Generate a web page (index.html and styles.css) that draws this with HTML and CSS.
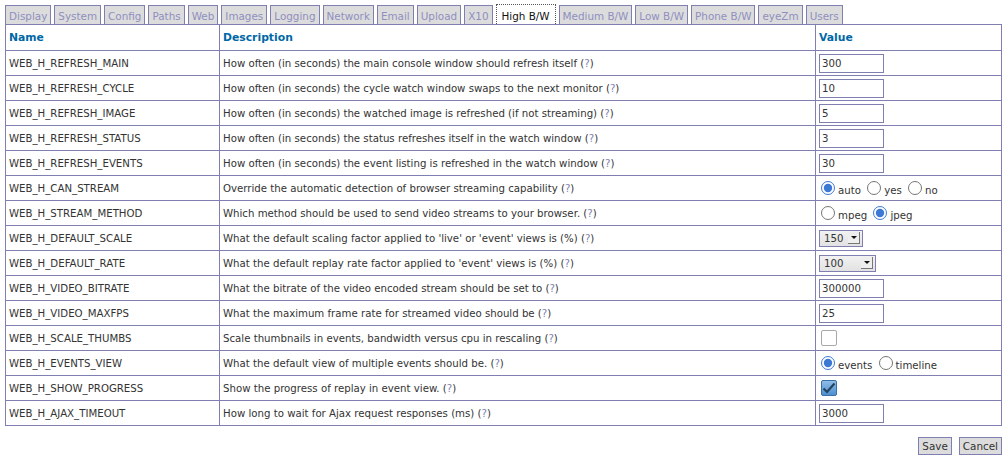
FILE: index.html
```html
<!DOCTYPE html>
<html lang="en">
<head>
    <meta charset="UTF-8">
    <title>ZoneMinder - Options</title>
    <link rel="stylesheet" href="styles.css">
</head>
<body>
    <ul class="tabs">
        <li><a href="#">Display</a></li>
        <li><a href="#">System</a></li>
        <li><a href="#">Config</a></li>
        <li><a href="#">Paths</a></li>
        <li><a href="#">Web</a></li>
        <li><a href="#">Images</a></li>
        <li><a href="#">Logging</a></li>
        <li><a href="#">Network</a></li>
        <li><a href="#">Email</a></li>
        <li><a href="#">Upload</a></li>
        <li><a href="#">X10</a></li>
        <li class="active">High B/W</li>
        <li><a href="#">Medium B/W</a></li>
        <li><a href="#">Low B/W</a></li>
        <li><a href="#">Phone B/W</a></li>
        <li><a href="#">eyeZm</a></li>
        <li><a href="#">Users</a></li>
    </ul>

    <form class="options">
        <table class="contentTable">
            <thead>
                <tr>
                    <th class="colName">Name</th>
                    <th class="colDesc">Description</th>
                    <th class="colValue">Value</th>
                </tr>
            </thead>
            <tbody>
                <tr>
                    <td>WEB_H_REFRESH_MAIN</td>
                    <td>How often (in seconds) the main console window should refresh itself (<a href="#">?</a>)</td>
                    <td><input type="text" class="small" value="300"></td>
                </tr>
                <tr>
                    <td>WEB_H_REFRESH_CYCLE</td>
                    <td>How often (in seconds) the cycle watch window swaps to the next monitor (<a href="#">?</a>)</td>
                    <td><input type="text" class="small" value="10"></td>
                </tr>
                <tr>
                    <td>WEB_H_REFRESH_IMAGE</td>
                    <td>How often (in seconds) the watched image is refreshed (if not streaming) (<a href="#">?</a>)</td>
                    <td><input type="text" class="small" value="5"></td>
                </tr>
                <tr>
                    <td>WEB_H_REFRESH_STATUS</td>
                    <td>How often (in seconds) the status refreshes itself in the watch window (<a href="#">?</a>)</td>
                    <td><input type="text" class="small" value="3"></td>
                </tr>
                <tr>
                    <td>WEB_H_REFRESH_EVENTS</td>
                    <td>How often (in seconds) the event listing is refreshed in the watch window (<a href="#">?</a>)</td>
                    <td><input type="text" class="small" value="30"></td>
                </tr>
                <tr>
                    <td>WEB_H_CAN_STREAM</td>
                    <td>Override the automatic detection of browser streaming capability (<a href="#">?</a>)</td>
                    <td>
                        <label><input type="radio" name="stream" checked>auto</label>
                        <label><input type="radio" name="stream">yes</label>
                        <label><input type="radio" name="stream">no</label>
                    </td>
                </tr>
                <tr>
                    <td>WEB_H_STREAM_METHOD</td>
                    <td>Which method should be used to send video streams to your browser. (<a href="#">?</a>)</td>
                    <td>
                        <label><input type="radio" name="method">mpeg</label>
                        <label><input type="radio" name="method" checked>jpeg</label>
                    </td>
                </tr>
                <tr>
                    <td>WEB_H_DEFAULT_SCALE</td>
                    <td>What the default scaling factor applied to 'live' or 'event' views is (%) (<a href="#">?</a>)</td>
                    <td>
                        <div class="select narrow"><span>150</span><i></i></div>
                    </td>
                </tr>
                <tr>
                    <td>WEB_H_DEFAULT_RATE</td>
                    <td>What the default replay rate factor applied to 'event' views is (%) (<a href="#">?</a>)</td>
                    <td>
                        <div class="select wide"><span>100</span><i></i></div>
                    </td>
                </tr>
                <tr>
                    <td>WEB_H_VIDEO_BITRATE</td>
                    <td>What the bitrate of the video encoded stream should be set to (<a href="#">?</a>)</td>
                    <td><input type="text" class="small" value="300000"></td>
                </tr>
                <tr>
                    <td>WEB_H_VIDEO_MAXFPS</td>
                    <td>What the maximum frame rate for streamed video should be (<a href="#">?</a>)</td>
                    <td><input type="text" class="small" value="25"></td>
                </tr>
                <tr>
                    <td>WEB_H_SCALE_THUMBS</td>
                    <td>Scale thumbnails in events, bandwidth versus cpu in rescaling (<a href="#">?</a>)</td>
                    <td><span class="check"></span></td>
                </tr>
                <tr>
                    <td>WEB_H_EVENTS_VIEW</td>
                    <td>What the default view of multiple events should be. (<a href="#">?</a>)</td>
                    <td>
                        <label><input type="radio" name="view" checked>events</label>
                        <label><input type="radio" name="view">timeline</label>
                    </td>
                </tr>
                <tr>
                    <td>WEB_H_SHOW_PROGRESS</td>
                    <td>Show the progress of replay in event view. (<a href="#">?</a>)</td>
                    <td>
                        <span class="check checked">
                            <svg width="14" height="12" viewBox="0 0 14 12"><path d="M1.5 6.5 L5 10 L12.5 1.5" fill="none" stroke="#24425e" stroke-width="2.2"/></svg>
                        </span>
                    </td>
                </tr>
                <tr>
                    <td>WEB_H_AJAX_TIMEOUT</td>
                    <td>How long to wait for Ajax request responses (ms) (<a href="#">?</a>)</td>
                    <td><input type="text" class="small" value="3000"></td>
                </tr>
            </tbody>
        </table>
        <div class="buttons">
            <button type="button">Save</button>
            <button type="button">Cancel</button>
        </div>
    </form>
</body>
</html>
```

FILE: styles.css
```css
body {
    font-family: "DejaVu Sans", Verdana, sans-serif;
    font-size: 10.2px;
    color: #333333;
    background-color: #ffffff;
    margin: 4px 5px;
}
a {
    color: #7f7fb2;
    text-decoration: none;
}
.tabs {
    list-style: none;
    margin: 0;
    padding: 0;
    display: flex;
    gap: 3px;
    height: 20px;
    align-items: flex-end;
}
.tabs li {
    height: 19px;
    box-sizing: border-box;
    border: 1px solid #7f7fb2;
    border-bottom: none;
    background-color: #dcdcdc;
    padding: 3px 3px 0;
    line-height: 15px;
    font-size: 10.4px;
}
.tabs li a {
    color: #8f8fc0;
}
.tabs li.active {
    background-color: #ffffff;
    color: #111111;
    border: 1px dotted #555555;
    border-bottom: none;
    height: 20px;
    padding: 4px 5px 0;
}
.contentTable {
    width: 997px;
    border-collapse: collapse;
    border: 1px solid #7f7fb2;
}
.contentTable th,
.contentTable td {
    border: 1px solid #7f7fb2;
    height: 24px;
    padding: 0 3px;
    text-align: left;
    white-space: nowrap;
}
.contentTable th {
    color: #0068a6;
    font-weight: bold;
    font-size: 10.8px;
    height: 25px;
}
.colName {
    width: 207px;
}
.colDesc {
    width: 589px;
}
.contentTable input[type="text"] {
    font-family: "DejaVu Sans", Verdana, sans-serif;
    font-size: 10.2px;
    color: #333333;
    width: 65px;
    height: 19px;
    box-sizing: border-box;
    border: 1px solid #7f7fb2;
    padding: 1px 2px;
    margin: 0;
    vertical-align: middle;
}
.contentTable label {
    margin-right: 1px;
}
.contentTable input[type="radio"] {
    accent-color: #3b79d4;
    width: 14px;
    height: 14px;
    margin: 0 3px 0 2px;
    vertical-align: -1px;
}
.select {
    display: inline-flex;
    align-items: center;
    height: 17px;
    box-sizing: border-box;
    border: 1px solid #7f7fb2;
    background: linear-gradient(#f2f2f2, #e2e2e2);
    padding: 0 2px 0 4px;
    justify-content: space-between;
    vertical-align: middle;
}
.select.narrow {
    width: 44px;
}
.select.wide {
    width: 57px;
}
.select i {
    display: inline-block;
    width: 12px;
    height: 12px;
    box-sizing: border-box;
    background: #eeeeee;
    border-right: 1px solid #777777;
    border-bottom: 1px solid #777777;
    position: relative;
}
.select i::after {
    content: "";
    position: absolute;
    left: 3px;
    top: 4px;
    border-left: 3px solid transparent;
    border-right: 3px solid transparent;
    border-top: 3px solid #111111;
}
.check {
    display: inline-flex;
    align-items: center;
    justify-content: center;
    width: 14px;
    height: 14px;
    border: 1px solid #a8a8a8;
    border-radius: 2px;
    margin-left: 2px;
    vertical-align: middle;
    background-color: #ffffff;
}
.check.checked {
    background: linear-gradient(#8fbde6, #4d8fd0);
    border-color: #3b6fa8;
}
.buttons {
    display: flex;
    justify-content: flex-end;
    gap: 7px;
    margin-top: 11px;
}
.buttons button {
    font-family: "DejaVu Sans", Verdana, sans-serif;
    font-size: 10.4px;
    color: #333333;
    background-color: #dcdcdc;
    border: 1px solid #7f7fb2;
    height: 18px;
    padding: 0 3px;
    margin: 0;
}
```
